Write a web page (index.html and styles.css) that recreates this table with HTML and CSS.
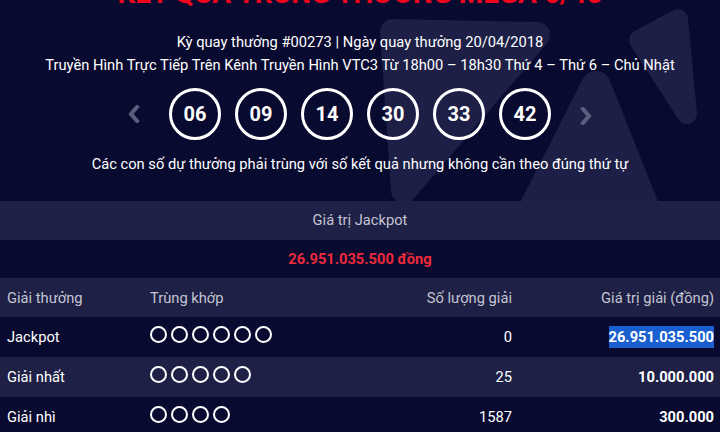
FILE: index.html
```html
<!DOCTYPE html>
<html lang="vi">
<head>
<meta charset="utf-8">
<title>Kết quả Mega 6/45</title>
<link rel="stylesheet" href="styles.css">
</head>
<body>
<div class="page">
  <section class="hero">
    <svg class="deco" width="720" height="201" viewBox="0 0 720 201" aria-hidden="true">
      <polygon class="petal" stroke-width="26" points="393,32 537,35 404,190"/>
      <polygon class="petal" stroke-width="30" points="596,86 522,232 654,232"/>
      <polygon class="petal" stroke-width="20" points="639,40 678,19 687,114"/>
    </svg>
    <div class="hero-inner">
      <h1 class="title">KẾT QUẢ TRÚNG THƯỞNG MEGA 6/45</h1>
      <p class="meta">Kỳ quay thưởng #00273 | Ngày quay thưởng 20/04/2018</p>
      <p class="meta">Truyền Hình Trực Tiếp Trên Kênh Truyền Hình VTC3 Từ 18h00 – 18h30 Thứ 4 – Thứ 6 – Chủ Nhật</p>
      <div class="balls">
        <svg class="arrow arrow-left" width="14" height="18" viewBox="0 0 14 18"><polyline points="10,2 4,9 10,16"/></svg>
        <span class="ball">06</span>
        <span class="ball">09</span>
        <span class="ball">14</span>
        <span class="ball">30</span>
        <span class="ball">33</span>
        <span class="ball">42</span>
        <svg class="arrow arrow-right" width="14" height="18" viewBox="0 0 14 18"><polyline points="4,2 10,9 4,16"/></svg>
      </div>
      <p class="note">Các con số dự thưởng phải trùng với số kết quả nhưng không cần theo đúng thứ tự</p>
    </div>
  </section>
  <div class="jp-label">Giá trị Jackpot</div>
  <div class="jp-value">26.951.035.500 đồng</div>
  <table class="prizes">
    <colgroup>
      <col class="c1"><col class="c2"><col class="c3"><col class="c4">
    </colgroup>
    <thead>
      <tr>
        <th class="left">Giải thưởng</th>
        <th class="left">Trùng khớp</th>
        <th class="right">Số lượng giải</th>
        <th class="right">Giá trị giải (đồng)</th>
      </tr>
    </thead>
    <tbody>
      <tr class="dark">
        <td>Jackpot</td>
        <td><span class="dots"><i></i><i></i><i></i><i></i><i></i><i></i></span></td>
        <td class="right">0</td>
        <td class="right val"><span class="sel">26.951.035.500</span></td>
      </tr>
      <tr class="light">
        <td>Giải nhất</td>
        <td><span class="dots"><i></i><i></i><i></i><i></i><i></i></span></td>
        <td class="right">25</td>
        <td class="right val">10.000.000</td>
      </tr>
      <tr class="dark">
        <td>Giải nhì</td>
        <td><span class="dots"><i></i><i></i><i></i><i></i></span></td>
        <td class="right">1587</td>
        <td class="right val">300.000</td>
      </tr>
    </tbody>
  </table>
</div>
</body>
</html>
```
FILE: styles.css
```css
html, body {
  margin: 0;
  padding: 0;
  background: #090a2f;
  overflow: hidden;
}
body {
  font-family: Roboto, "Noto Sans", sans-serif;
  color: #ffffff;
  font-size: 14.7px;
}
.page {
  width: 720px;
}
.hero {
  position: relative;
  height: 201px;
  overflow: hidden;
}
.deco {
  position: absolute;
  left: 0;
  top: 0;
}
.petal {
  fill: #1d1f46;
  stroke: #1d1f46;
  stroke-linejoin: round;
}
.hero-inner {
  position: relative;
  display: flex;
  flex-direction: column;
  align-items: center;
}
.title {
  margin: -20px 0 0;
  font-size: 28px;
  line-height: 28px;
  font-weight: 700;
  color: #f0051c;
  white-space: nowrap;
}
.meta {
  margin: 0;
  line-height: 23px;
  font-size: 14.7px;
}
.title + .meta {
  margin-top: 23px;
}
.balls {
  margin-top: 11px;
  display: flex;
  align-items: center;
  gap: 14px;
}
.arrow {
  fill: none;
  stroke: #5c5e7e;
  stroke-width: 4;
  stroke-linecap: square;
}
.arrow-left {
  margin-right: 14px;
}
.arrow-right {
  margin-left: 14px;
  position: relative;
  top: 2px;
}
.ball {
  width: 52px;
  height: 52px;
  box-sizing: border-box;
  border: 3px solid #ffffff;
  border-radius: 50%;
  display: flex;
  align-items: center;
  justify-content: center;
  font-size: 20px;
  font-weight: 700;
}
.note {
  margin: 13px 0 0;
  line-height: 23px;
  font-size: 14.7px;
}
.jp-label {
  height: 39px;
  line-height: 39px;
  background: #1e2045;
  text-align: center;
  color: #c4c5d2;
}
.jp-value {
  height: 38px;
  line-height: 38px;
  text-align: center;
  color: #ec2a3c;
  font-weight: 700;
}
.prizes {
  width: 720px;
  border-collapse: collapse;
  table-layout: fixed;
  font-size: 14.7px;
}
.c1 { width: 143px; }
.c2 { width: 220px; }
.c3 { width: 155px; }
.c4 { width: 202px; }
.prizes th {
  height: 39px;
  background: #1e2045;
  color: #c4c5d2;
  font-weight: 400;
  padding: 0 7px;
}
.prizes td {
  height: 40px;
  padding: 0 7px;
}
.prizes .left { text-align: left; }
.prizes .right { text-align: right; padding-right: 6px; }
.prizes tr.light td { background: #1e2045; }
.prizes tr.dark td { background: #090a2f; }
.val { font-weight: 700; }
.sel {
  background: #1a5fcf;
  padding: 2px 0;
}
.dots {
  display: flex;
  gap: 4px;
  position: relative;
  top: -3px;
}
.dots i {
  display: block;
  width: 17px;
  height: 17px;
  box-sizing: border-box;
  border: 2.5px solid #ffffff;
  border-radius: 50%;
}
```
